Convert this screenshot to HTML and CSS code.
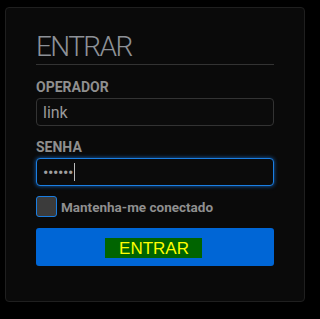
FILE: index.html
```html
<!DOCTYPE html>
<html lang="pt">
<head>
<meta charset="utf-8">
<title>Entrar</title>
<link rel="stylesheet" href="styles.css">
</head>
<body>
<div class="page">
  <form class="card">
    <h1 class="title">ENTRAR</h1>
    <label class="label">OPERADOR</label>
    <div class="field"><span class="value">link</span></div>
    <label class="label">SENHA</label>
    <div class="field focused"><span class="dots">••••••</span><span class="caret"></span></div>
    <div class="remember">
      <span class="checkbox"></span>
      <span class="remember-text">Mantenha-me conectado</span>
    </div>
    <div class="button"><span class="button-text">ENTRAR</span></div>
  </form>
</div>
</body>
</html>
```
FILE: styles.css
```css
html, body {
  margin: 0;
  padding: 0;
  background: #000;
}
.page {
  padding: 7px 0 0 5px;
}
.card {
  box-sizing: border-box;
  width: 300px;
  height: 295px;
  margin: 0;
  padding: 22px 30px 0 30px;
  background: #0a0a0a;
  border: 1px solid #1f1f1f;
  border-radius: 4px;
  display: flex;
  flex-direction: column;
  font-family: Roboto, "Liberation Sans", sans-serif;
}
.title {
  margin: 0;
  height: 33px;
  padding-bottom: 1px;
  border-bottom: 1px solid #333;
  font-weight: 300;
  font-size: 28px;
  line-height: 33px;
  color: #8d9197;
  letter-spacing: -1.6px;
}
.label {
  display: block;
  margin-top: 14px;
  margin-bottom: 3px;
  height: 16px;
  line-height: 16px;
  font-size: 14px;
  font-weight: 700;
  color: #8f8f8f;
}
.label + .field + .label {
  margin-top: 13px;
}
.field {
  box-sizing: border-box;
  height: 28px;
  border: 1px solid #333;
  border-radius: 4px;
  background: #0b0b0b;
  padding: 0 6px;
  display: flex;
  align-items: center;
}
.value {
  font-size: 16px;
  color: #9a9a9a;
}
.focused {
  border-color: #1b7fe3;
  box-shadow: 0 0 4px rgba(20, 120, 230, 0.8);
}
.dots {
  font-size: 16px;
  letter-spacing: -0.4px;
  color: #a0a0a0;
}
.caret {
  width: 1px;
  height: 18px;
  margin-left: 1px;
  background: #bbb;
}
.remember {
  display: flex;
  align-items: center;
  margin-top: 10px;
  gap: 4px;
}
.checkbox {
  box-sizing: border-box;
  width: 21px;
  height: 21px;
  background: #3b3b3b;
  border: 1px solid #1a7de0;
  border-radius: 3px;
}
.remember-text {
  font-size: 13.5px;
  font-weight: 700;
  color: #8f8f8f;
}
.button {
  margin-top: 11px;
  height: 38px;
  background: #0066d6;
  border-radius: 3px;
  display: flex;
  align-items: center;
  justify-content: center;
}
.button-text {
  margin-left: -3px;
  margin-top: 1px;
  padding: 0 13px 0 14px;
  height: 20px;
  line-height: 21px;
  background: #006400;
  color: #ffff00;
  font-family: "Liberation Sans", Arial, sans-serif;
  font-size: 17px;
}
```
